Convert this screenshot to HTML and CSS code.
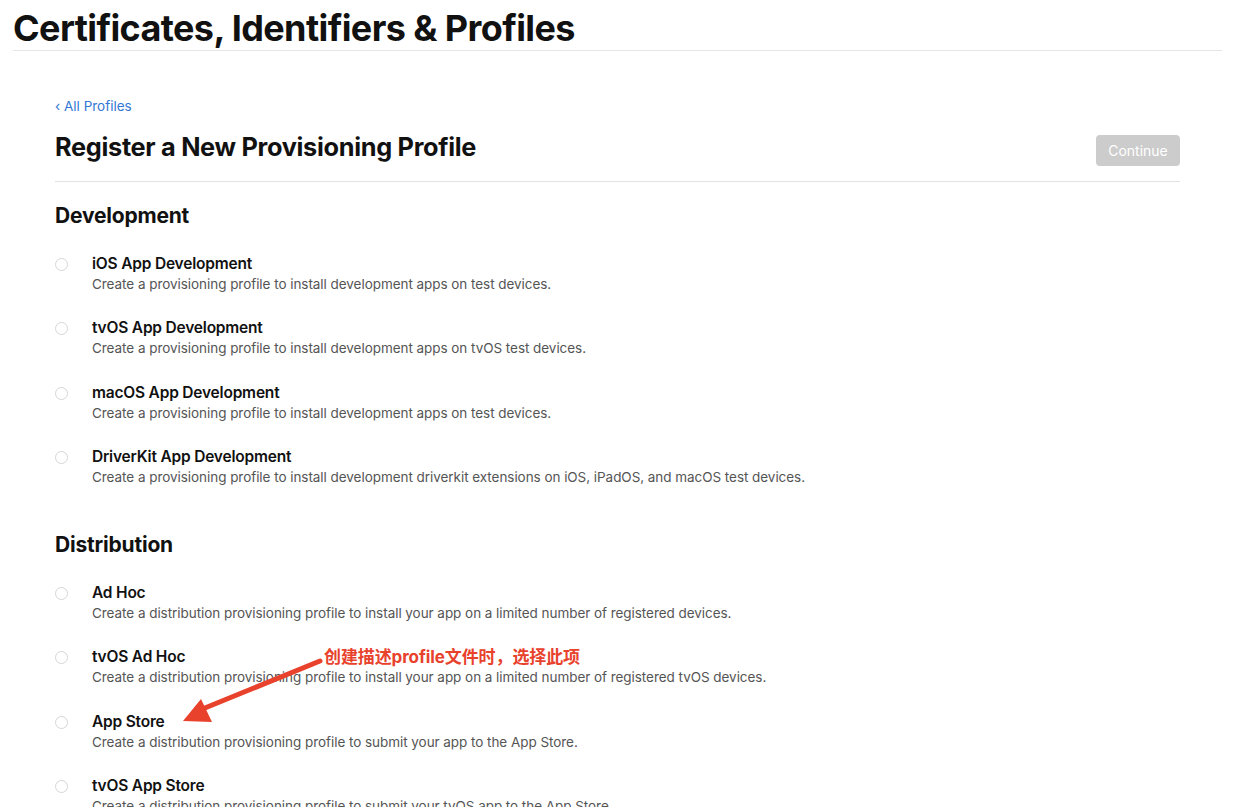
FILE: index.html
```html
<!DOCTYPE html>
<html lang="en">
<head>
<meta charset="utf-8">
<title>Certificates, Identifiers & Profiles</title>
<link rel="stylesheet" href="styles.css">
</head>
<body>
<header class="top">
  <h1 class="top-title">Certificates, Identifiers &amp; Profiles</h1>
</header>
<main class="content">
  <a class="back" href="#">‹ All Profiles</a>
  <div class="page-head">
    <h2 class="page-title">Register a New Provisioning Profile</h2>
    <button class="btn-continue" disabled>Continue</button>
  </div>

  <section class="group">
    <h3 class="group-title">Development</h3>
    <ul class="options">
      <li class="option"><span class="radio"></span><div class="opt-text"><div class="opt-name">iOS App Development</div><div class="opt-desc">Create a provisioning profile to install development apps on test devices.</div></div></li>
      <li class="option"><span class="radio"></span><div class="opt-text"><div class="opt-name">tvOS App Development</div><div class="opt-desc">Create a provisioning profile to install development apps on tvOS test devices.</div></div></li>
      <li class="option"><span class="radio"></span><div class="opt-text"><div class="opt-name">macOS App Development</div><div class="opt-desc">Create a provisioning profile to install development apps on test devices.</div></div></li>
      <li class="option"><span class="radio"></span><div class="opt-text"><div class="opt-name">DriverKit App Development</div><div class="opt-desc">Create a provisioning profile to install development driverkit extensions on iOS, iPadOS, and macOS test devices.</div></div></li>
    </ul>
  </section>

  <section class="group group-dist">
    <h3 class="group-title">Distribution</h3>
    <ul class="options">
      <li class="option"><span class="radio"></span><div class="opt-text"><div class="opt-name">Ad Hoc</div><div class="opt-desc">Create a distribution provisioning profile to install your app on a limited number of registered devices.</div></div></li>
      <li class="option"><span class="radio"></span><div class="opt-text"><div class="opt-name">tvOS Ad Hoc</div><div class="opt-desc">Create a distribution provisioning profile to install your app on a limited number of registered tvOS devices.</div></div></li>
      <li class="option"><span class="radio"></span><div class="opt-text"><div class="opt-name">App Store</div><div class="opt-desc">Create a distribution provisioning profile to submit your app to the App Store.</div></div></li>
      <li class="option"><span class="radio"></span><div class="opt-text"><div class="opt-name">tvOS App Store</div><div class="opt-desc">Create a distribution provisioning profile to submit your tvOS app to the App Store.</div></div></li>
    </ul>
  </section>
</main>

<div class="note">创建描述profile文件时，选择此项</div>
<svg class="arrow" width="1240" height="807" viewBox="0 0 1240 807">
  <line x1="320" y1="661" x2="200" y2="710" stroke="#e8412c" stroke-width="5" stroke-linecap="round"/>
  <polygon points="183,721 201,699 212,722" fill="#e8412c"/>
</svg>
<div class="shade"></div>
</body>
</html>
```
FILE: styles.css
```css
* { box-sizing: border-box; }
html, body { margin: 0; padding: 0; background: #fff; }
body {
  width: 1240px;
  height: 807px;
  overflow: hidden;
  position: relative;
  font-family: Inter, "Liberation Sans", "Noto Sans CJK SC", sans-serif;
  color: #1d1d1f;
}
.top {
  margin: 0 18px 0 13px;
  border-bottom: 1px solid #e6e6e6;
  height: 51px;
}
.top-title {
  margin: 0;
  padding-top: 8px;
  font-size: 36px;
  line-height: 40px;
  font-weight: 700;
  letter-spacing: -0.6px;
  color: #111;
}
.content {
  margin: 0 60px 0 55px;
  padding-top: 46px;
}
.back {
  display: block;
  font-size: 13.5px;
  line-height: 18px;
  color: #3478d4;
  text-decoration: none;
}
.page-head {
  display: flex;
  justify-content: space-between;
  align-items: flex-start;
  border-bottom: 1px solid #e3e3e3;
  padding-top: 17px;
  height: 67px;
}
.page-title {
  margin: 0;
  font-size: 25.3px;
  line-height: 30px;
  font-weight: 700;
  letter-spacing: -0.3px;
  color: #111;
}
.btn-continue {
  margin-top: 3px;
  width: 84px;
  height: 31px;
  border: 0;
  border-radius: 4px;
  background: #cccccc;
  color: #fff;
  font-family: inherit;
  font-size: 14px;
  padding: 0;
}
.group-title {
  margin: 0;
  font-size: 21px;
  line-height: 26px;
  font-weight: 700;
  letter-spacing: -0.2px;
  color: #111;
}
.group { padding-top: 21px; }
.group-dist { padding-top: 42px; }
.options {
  list-style: none;
  margin: 0;
  padding: 24px 0 0 0;
  display: flex;
  flex-direction: column;
  gap: 20px;
}
.option {
  display: flex;
  align-items: flex-start;
  gap: 24px;
  height: 44.3px;
}
.radio {
  flex: none;
  width: 13px;
  height: 13px;
  border-radius: 50%;
  border: 1px solid #d6d6d6;
  margin-top: 5px;
}
.opt-name {
  font-size: 15.5px;
  line-height: 22px;
  font-weight: 600;
  letter-spacing: -0.2px;
  color: #111;
}
.opt-desc {
  font-size: 13.5px;
  line-height: 18px;
  color: #555;
  letter-spacing: -0.05px;
}
.note {
  position: absolute;
  left: 324px;
  top: 647px;
  font-size: 17px;
  line-height: 20px;
  font-weight: 700;
  color: #e8412c;
  letter-spacing: -0.1px;
}
.arrow {
  position: absolute;
  left: 0;
  top: 0;
  pointer-events: none;
}
.shade {
  position: absolute;
  left: -100px;
  top: 760px;
  width: 1100px;
  height: 120px;
  background: radial-gradient(ellipse 50% 45% at 50% 85%, rgba(0,0,0,0.18), rgba(0,0,0,0) 100%);
  pointer-events: none;
}
```
